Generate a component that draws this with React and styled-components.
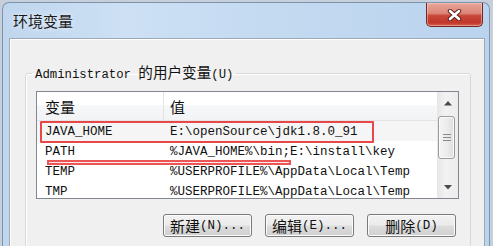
import React from 'react';
import styled, { createGlobalStyle } from 'styled-components';

const mono = `"Liberation Mono", "DejaVu Sans Mono", monospace`;
const han = `"Noto Sans CJK SC", "Noto Sans CJK JP", sans-serif`;

const GlobalStyle = createGlobalStyle`
  html, body {
    margin: 0;
    padding: 0;
    height: 246px;
    overflow: hidden;
    background: #c7d0da;
  }
  #root {
    height: 246px;
  }
`;

const Window = styled.div`
  margin: 2px 3px 0 2px;
  height: 244px;
  box-sizing: border-box;
  border: 1px solid #7d93ac;
  border-bottom: none;
  border-radius: 7px 7px 0 0;
  background: linear-gradient(to right, #bfd6ee 0%, #cde0f4 25%, #c4daf1 55%, #bad3ee 100%);
  padding: 0 4px 0 6px;
  display: flex;
  flex-direction: column;
  overflow: hidden;
`;

const TitleBar = styled.div`
  height: 35px;
  flex-shrink: 0;
  display: flex;
  align-items: center;
  justify-content: space-between;
  padding-left: 4px;
`;

const Title = styled.span`
  font-family: ${han};
  font-size: 15px;
  color: #1a1a1a;
  text-shadow: 0 0 6px rgba(255, 255, 255, 0.9);
`;

const CloseButton = styled.div`
  align-self: flex-start;
  width: 57px;
  height: 24px;
  margin-right: 2px;
  box-sizing: border-box;
  border: 1px solid #6f2a25;
  border-top: none;
  border-radius: 0 0 5px 5px;
  background: linear-gradient(to bottom, #e7a79b 0%, #dc8576 45%, #c8473a 55%, #c2372b 85%, #d5604f 100%);
  box-shadow: inset 0 0 0 1px rgba(255, 220, 210, 0.45);
  display: flex;
  align-items: center;
  justify-content: center;
`;

const Panel = styled.div`
  flex: 1;
  background: #f0f0f0;
  border: 1px solid #9ea8b3;
  border-bottom: none;
  box-shadow: inset 1px 1px 0 #ffffff;
  padding: 25px 13px 0 15px;
`;

const Group = styled.fieldset`
  margin: 0;
  min-width: 0;
  border: 1px solid #d5d9dd;
  border-radius: 3px;
  box-shadow: inset 1px 1px 0 #ffffff;
  padding: 8px 11px 30px 10px;
`;

const GroupLabel = styled.legend`
  margin-left: -4px;
  padding: 0 3px;
  line-height: 16px;
  font-family: ${mono};
  font-size: 12.3px;
  color: #111;
`;

const Han = styled.span`
  font-family: ${han};
  font-size: ${p => p.size || 15}px;
`;

const List = styled.div`
  height: 108px;
  box-sizing: border-box;
  border: 1px solid #828790;
  background: #ffffff;
  display: flex;
  overflow: hidden;
`;

const ListContent = styled.div`
  position: relative;
  width: 400px;
  overflow: hidden;
`;

const Header = styled.div`
  height: 29px;
  box-sizing: border-box;
  display: flex;
  border-bottom: 1px solid #e5e5e5;
  background: linear-gradient(to bottom, #ffffff 0%, #ffffff 45%, #f6f7f9 50%, #f2f3f5 100%);
`;

const HeaderCell = styled.div`
  width: ${p => (p.first ? '127px' : 'auto')};
  flex: ${p => (p.first ? 'none' : 1)};
  box-sizing: border-box;
  padding-left: ${p => (p.first ? 8 : 6)}px;
  border-right: ${p => (p.first ? '1px solid #e3e3e3' : 'none')};
  display: flex;
  align-items: center;
  font-family: ${han};
  font-size: 15px;
  color: #111;
`;

const Row = styled.div`
  height: 20px;
  box-sizing: border-box;
  padding-top: 2px;
  display: flex;
  align-items: center;
  background: ${p => (p.hover ? '#f5f5f5' : '#ffffff')};
  font-family: ${mono};
  font-size: 12.5px;
  color: #111;
  white-space: nowrap;
`;

const NameCell = styled.div`
  width: 127px;
  flex: none;
  box-sizing: border-box;
  padding-left: 8px;
  overflow: hidden;
`;

const ValueCell = styled.div`
  padding-left: 6px;
`;

const MarkBox = styled.div`
  position: absolute;
  left: 3px;
  top: 29px;
  width: 334px;
  height: 22px;
  box-sizing: border-box;
  border: 2px solid #e8474a;
  border-radius: 1px;
`;

const MarkLine = styled.div`
  position: absolute;
  left: 10px;
  top: 68px;
  width: 244px;
  height: 5px;
  box-sizing: border-box;
  border: 2px solid #ec5555;
  background: #fde8e8;
`;

const ScrollBar = styled.div`
  width: 21px;
  flex: none;
  display: flex;
  flex-direction: column;
  background: linear-gradient(to right, #e6e6e6 0%, #f2f2f2 40%, #ededed 100%);
`;

const ArrowButton = styled.div`
  height: ${p => p.h}px;
  flex: none;
  display: flex;
  align-items: center;
  justify-content: center;
`;

const Track = styled.div`
  flex: 1;
`;

const Thumb = styled.div`
  margin: 2px 3px 0 1px;
  height: 43px;
  box-sizing: border-box;
  border: 1px solid #9b9b9b;
  border-radius: 3px;
  background: linear-gradient(to right, #f4f4f4 0%, #ececec 50%, #dedede 100%);
  box-shadow: inset 0 0 0 1px #fbfbfb;
  display: flex;
  align-items: center;
  justify-content: center;
`;

const ButtonRow = styled.div`
  display: flex;
  justify-content: flex-end;
  gap: 13px;
  margin-top: 15px;
  padding-right: 3px;
`;

const Button = styled.button`
  width: 89px;
  height: 23px;
  box-sizing: border-box;
  padding: 0;
  border: 1px solid #7a7a7a;
  border-radius: 3px;
  background: linear-gradient(to bottom, #f2f2f2 0%, #ebebeb 48%, #dddddd 52%, #cfcfcf 100%);
  box-shadow: inset 0 0 0 1px #fbfbfb;
  display: flex;
  align-items: center;
  justify-content: center;
  font-family: ${mono};
  font-size: 12.5px;
  color: #111;
  white-space: nowrap;
`;

const vars = [
  { name: 'JAVA_HOME', value: 'E:\\openSource\\jdk1.8.0_91', hover: true },
  { name: 'PATH', value: '%JAVA_HOME%\\bin;E:\\install\\key' },
  { name: 'TEMP', value: '%USERPROFILE%\\AppData\\Local\\Temp' },
  { name: 'TMP', value: '%USERPROFILE%\\AppData\\Local\\Temp' },
];

const CloseIcon = () => (
  <svg width="15" height="12" viewBox="0 0 15 12">
    <path d="M3 2 L12 10 M12 2 L3 10" stroke="#5a1f1a" strokeWidth="4.4" strokeLinecap="round" />
    <path d="M3 2 L12 10 M12 2 L3 10" stroke="#ffffff" strokeWidth="2.6" strokeLinecap="round" />
  </svg>
);

const Arrow = ({ down }) => (
  <svg width="8" height="5" viewBox="0 0 8 5">
    <path d={down ? 'M0 0 L8 0 L4 4.5 Z' : 'M0 4.5 L8 4.5 L4 0 Z'} fill="#4a4a4a" />
  </svg>
);

const Grip = () => (
  <svg width="8" height="7" viewBox="0 0 8 7">
    <path d="M0 0.5 H8 M0 3.5 H8 M0 6.5 H8" stroke="#8a8a8a" strokeWidth="1" />
  </svg>
);

export default function App() {
  return (
    <>
      <GlobalStyle />
      <Window>
        <TitleBar>
          <Title>环境变量</Title>
          <CloseButton><CloseIcon /></CloseButton>
        </TitleBar>
        <Panel>
          <Group>
            <GroupLabel>Administrator <Han size={14.6}>的用户变量</Han>(U)</GroupLabel>
            <List>
              <ListContent>
                <Header>
                  <HeaderCell first>变量</HeaderCell>
                  <HeaderCell>值</HeaderCell>
                </Header>
                {vars.map(v => (
                  <Row key={v.name} hover={v.hover}>
                    <NameCell>{v.name}</NameCell>
                    <ValueCell>{v.value}</ValueCell>
                  </Row>
                ))}
                <MarkBox />
                <MarkLine />
              </ListContent>
              <ScrollBar>
                <ArrowButton h={22}><Arrow /></ArrowButton>
                <Track>
                  <Thumb><Grip /></Thumb>
                </Track>
                <ArrowButton h={21}><Arrow down /></ArrowButton>
              </ScrollBar>
            </List>
            <ButtonRow>
              <Button><Han>新建</Han>(N)...</Button>
              <Button><Han>编辑</Han>(E)...</Button>
              <Button><Han>删除</Han>(D)</Button>
            </ButtonRow>
          </Group>
        </Panel>
      </Window>
    </>
  );
}
